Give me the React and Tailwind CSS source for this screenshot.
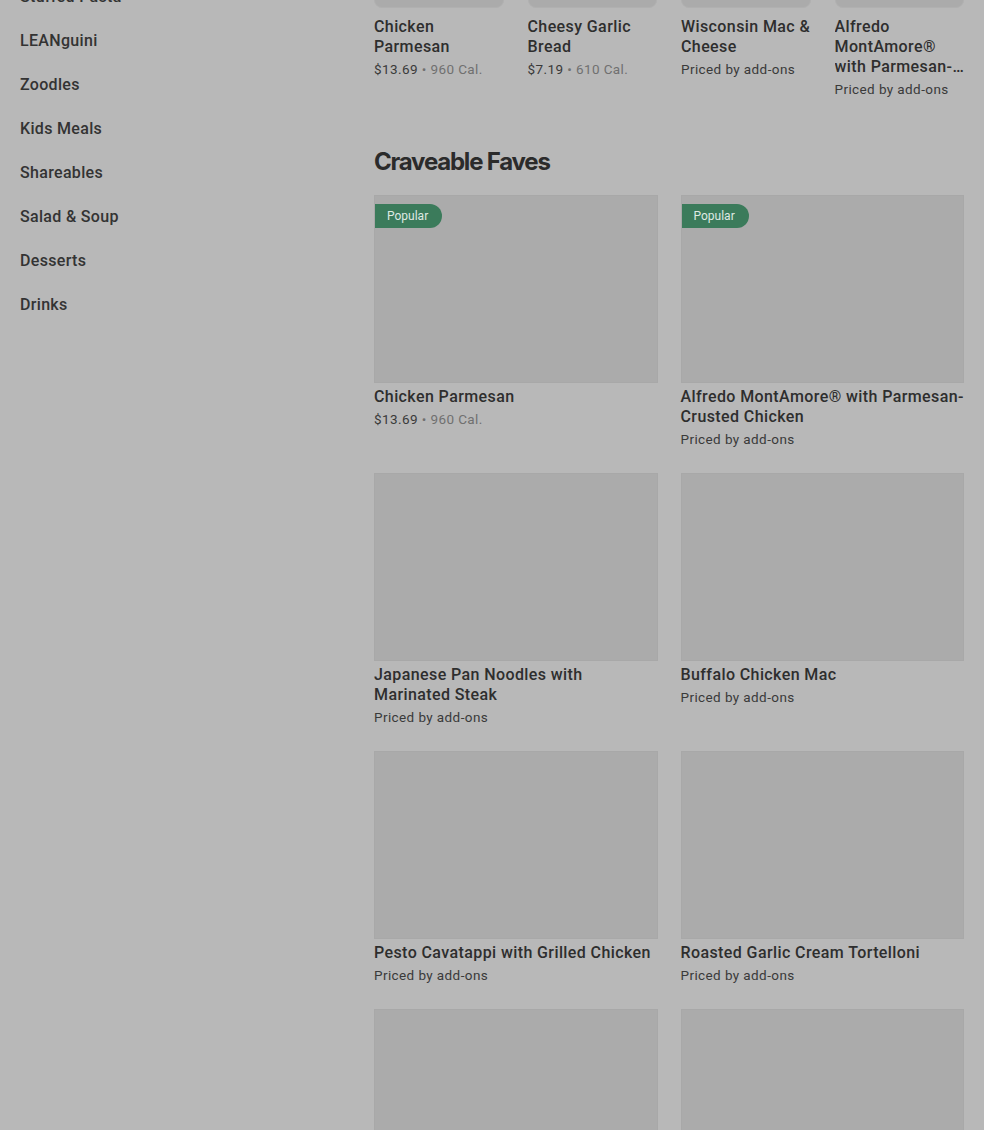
import React from "react";

const nav = ["Stuffed Pasta", "LEANguini", "Zoodles", "Kids Meals", "Shareables", "Salad & Soup", "Desserts", "Drinks"];

const carousel = [
  { name: "Chicken Parmesan", price: "$13.69", cal: "960 Cal." },
  { name: "Cheesy Garlic Bread", price: "$7.19", cal: "610 Cal." },
  { name: "Wisconsin Mac & Cheese" },
  { name: "Alfredo MontAmore® with Parmesan-Crusted Chicken" },
];

const faves = [
  { name: "Chicken Parmesan", price: "$13.69", cal: "960 Cal.", popular: true },
  { name: "Alfredo MontAmore® with Parmesan-Crusted Chicken", popular: true },
  { name: "Japanese Pan Noodles with Marinated Steak" },
  { name: "Buffalo Chicken Mac" },
  { name: "Pesto Cavatappi with Grilled Chicken" },
  { name: "Roasted Garlic Cream Tortelloni" },
  { name: "" },
  { name: "" },
];

function Price({ item }) {
  if (!item.price) {
    return (
      <div className="mt-[2px] h-5 text-[13.5px] leading-5 tracking-[0.03em] text-[#3a3a3a]">Priced by add-ons</div>
    );
  }
  return (
    <div className="mt-[2px] h-5 text-[13.5px] leading-5 tracking-[0.03em] text-[#3a3a3a]">
      {item.price} <span className="text-[#707070]">• {item.cal}</span>
    </div>
  );
}

export default function App() {
  return (
    <div
      className="flex w-full h-[1130px] overflow-hidden bg-[#b8b8b8] text-[#2e2e2e]"
      style={{ fontFamily: "Roboto, 'Noto Sans', sans-serif" }}
    >
      {/* sidebar */}
      <div className="w-[374px] shrink-0 pl-5">
        <ul className="-mt-[25px]">
          {nav.map((n) => (
            <li key={n} className="py-3 text-base leading-5 font-medium tracking-[0.02em] text-[#333]">
              {n}
            </li>
          ))}
        </ul>
      </div>

      {/* main */}
      <div className="flex-1 pr-5">
        <div className="grid grid-cols-4 gap-x-6 -mt-[122px]">
          {carousel.map((c) => (
            <div key={c.name}>
              <div className="h-[130px] rounded-lg bg-[#ababab] border border-[#b0b0b0]" />
              <div className="mt-[9px] text-base leading-5 font-medium tracking-[0.025em] line-clamp-3">{c.name}</div>
              <Price item={c} />
            </div>
          ))}
        </div>

        <h2
          className="mt-[47px] text-2xl leading-8 font-bold tracking-tighter text-[#2b2b2b]"
          style={{ fontFamily: "Inter, sans-serif" }}
        >
          Craveable Faves
        </h2>

        <div className="mt-[17px] grid grid-cols-2 gap-x-[23px] gap-y-6">
          {faves.map((f, i) => (
            <div key={i}>
              <div className="relative h-[188px] bg-[#ababab] border border-[#a8a8a8]">
                {f.popular && (
                  <span className="absolute left-0 top-2 h-6 pl-3 pr-[14px] rounded-r-full bg-[#3b7b5b] text-[12px] leading-6 text-[#dfe9e3]">
                    Popular
                  </span>
                )}
              </div>
              {f.name && (
                <>
                  <div className="mt-[4px] text-base leading-5 font-medium tracking-[0.025em]">{f.name}</div>
                  <Price item={f} />
                </>
              )}
            </div>
          ))}
        </div>
      </div>
    </div>
  );
}
